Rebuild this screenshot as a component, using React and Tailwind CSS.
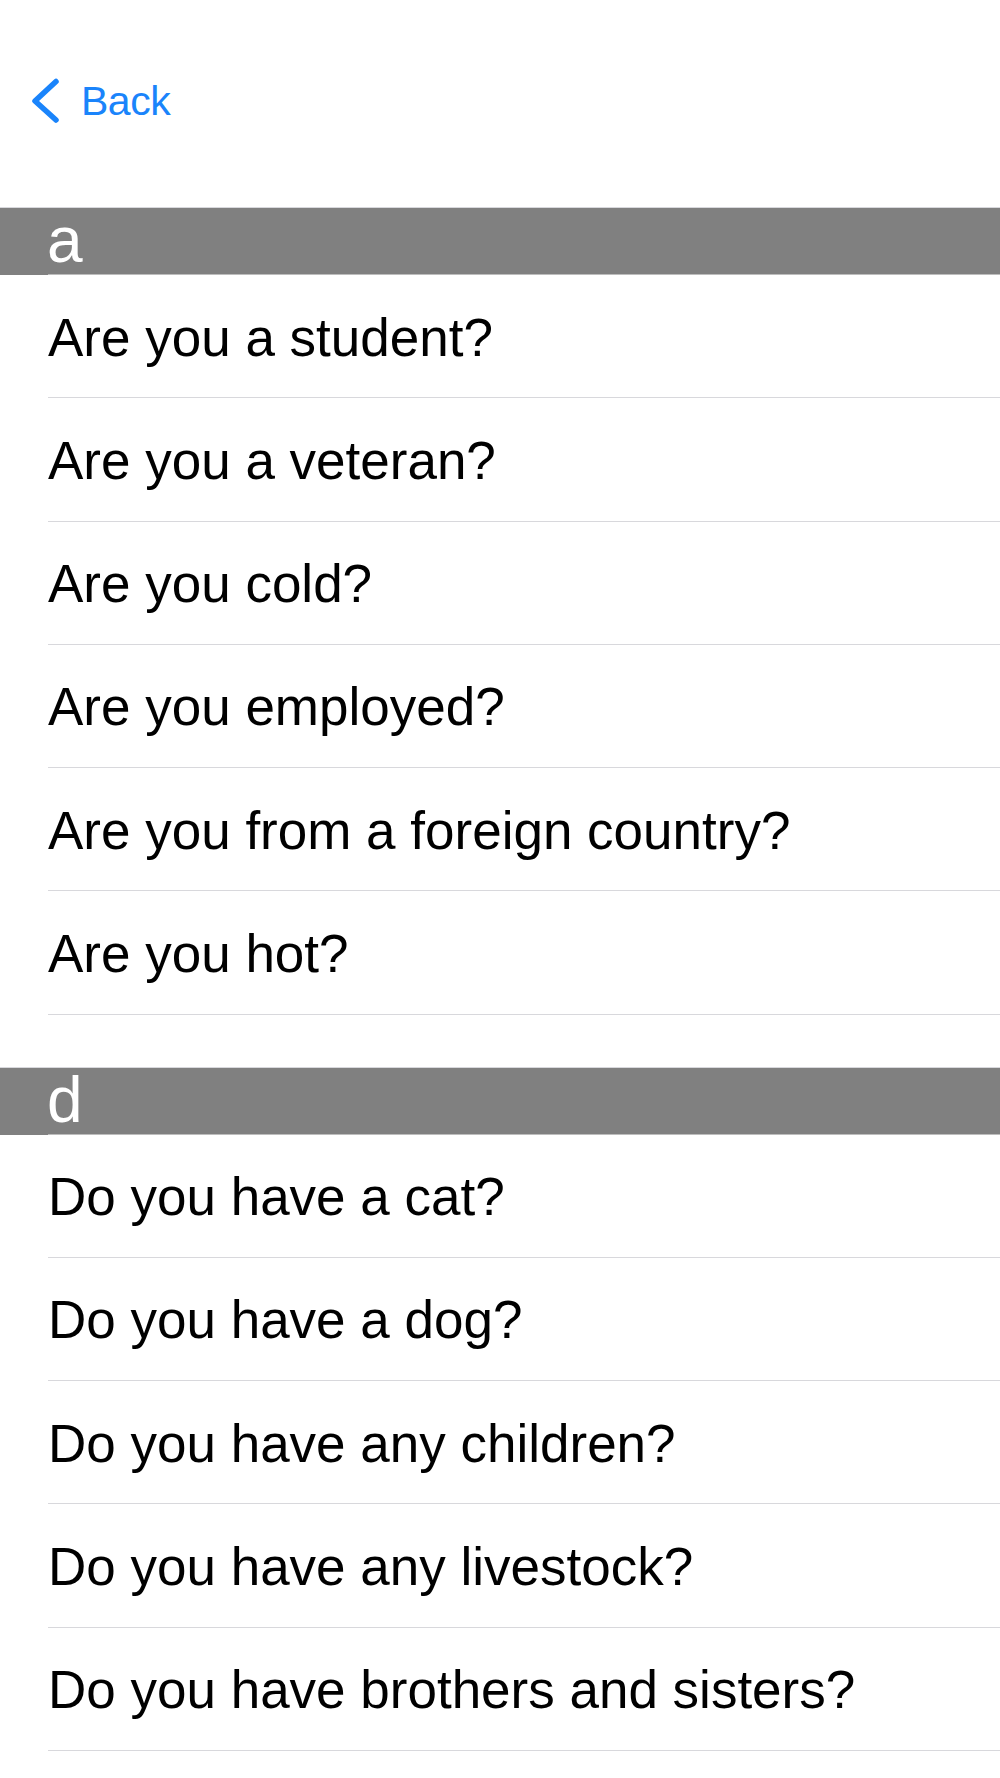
import React from "react";

const sections = [
  {
    letter: "a",
    items: [
      "Are you a student?",
      "Are you a veteran?",
      "Are you cold?",
      "Are you employed?",
      "Are you from a foreign country?",
      "Are you hot?",
    ],
  },
  {
    letter: "d",
    items: [
      "Do you have a cat?",
      "Do you have a dog?",
      "Do you have any children?",
      "Do you have any livestock?",
      "Do you have brothers and sisters?",
    ],
  },
];

function Row({ text }) {
  return (
    <div className="h-[123.25px] flex flex-col">
      <div className="flex-1 flex items-center pl-[48px] pt-[2px] text-[53px] leading-none text-black">
        {text}
      </div>
      <div className="h-px ml-[48px] bg-[#d8d8dc]" />
    </div>
  );
}

function Header({ letter }) {
  return (
    <div className="relative h-[67px] bg-[#808080]">
      <div className="absolute left-0 right-0 -top-px h-px bg-[#d8d8dc]" />
      <div className="pl-[47px] text-[64px] leading-[64px] text-white">{letter}</div>
      <div className="absolute left-[48px] right-0 bottom-0 h-px bg-[#bdbdbd]" />
    </div>
  );
}

export default function App() {
  return (
    <div
      className="w-[1000px] min-h-[1778px] bg-white"
      style={{ fontFamily: '"Liberation Sans", Arial, sans-serif' }}
    >
      <div className="h-[208px] pt-[76px]">
        <div className="flex items-center h-[50px]">
          <svg
            width="34"
            height="50"
            viewBox="0 0 34 50"
            className="ml-[28px]"
            fill="none"
            stroke="#1a84fb"
            strokeWidth="5.5"
            strokeLinecap="round"
            strokeLinejoin="round"
          >
            <polyline points="28,5.5 7,25 28,44" />
          </svg>
          <span className="ml-[19px] text-[41px] leading-none tracking-[-0.5px] text-[#1a84fb]">
            Back
          </span>
        </div>
      </div>
      {sections.map((s, i) => (
        <div key={s.letter} className={i > 0 ? "mt-[53px]" : ""}>
          <Header letter={s.letter} />
          {s.items.map((t) => (
            <Row key={t} text={t} />
          ))}
        </div>
      ))}
    </div>
  );
}
